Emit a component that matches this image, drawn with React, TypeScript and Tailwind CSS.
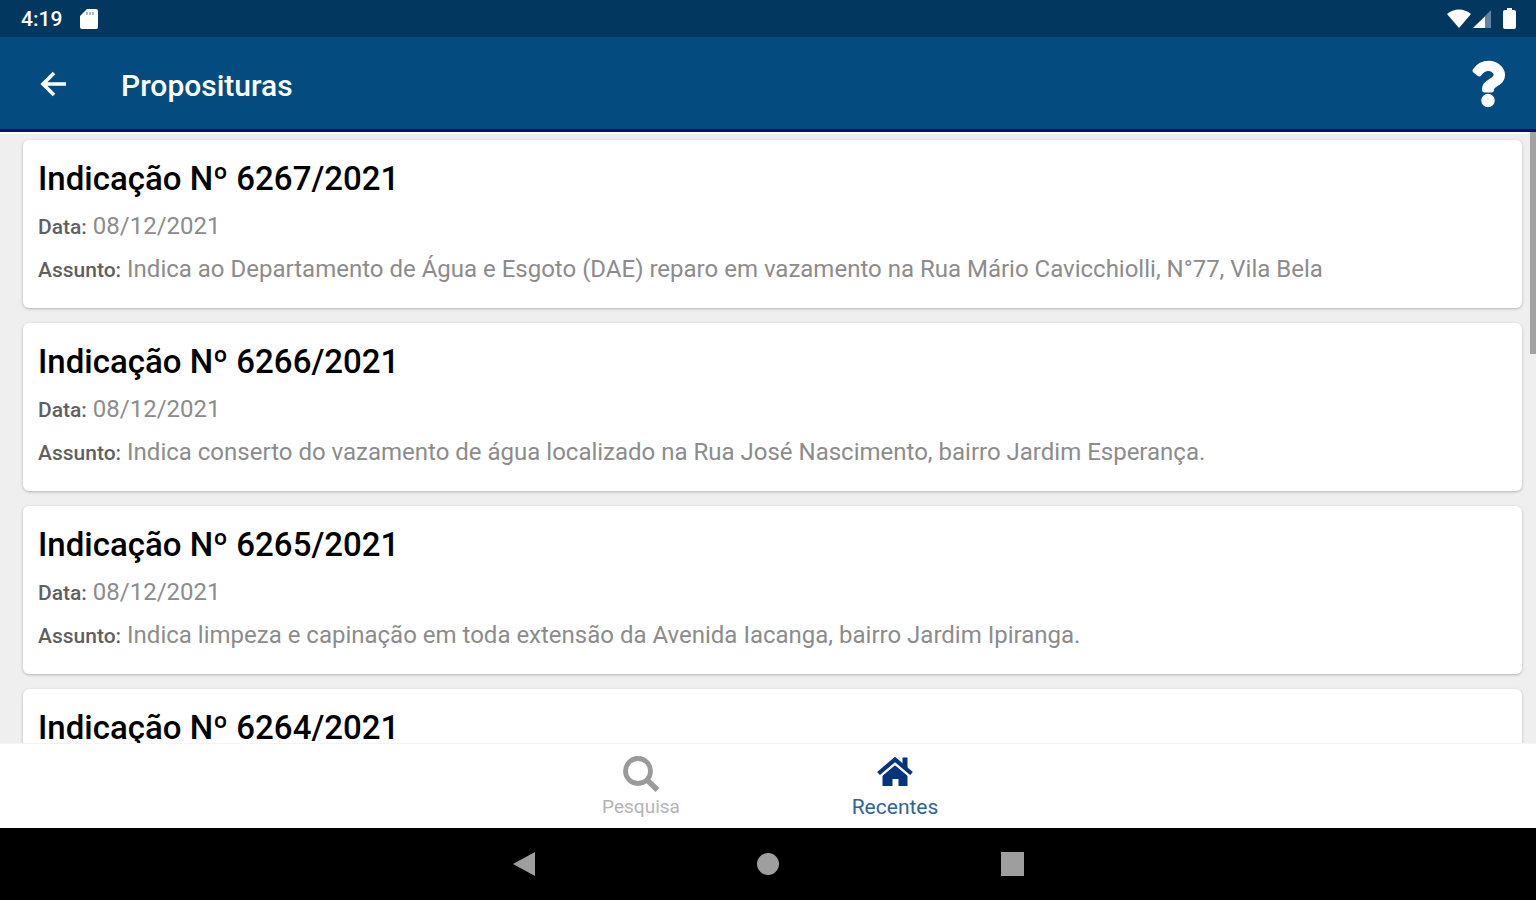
import React from "react";
import { FaQuestion } from "react-icons/fa";

type Proposal = { number: string; date: string; subject: string };

const proposals: Proposal[] = [
  {
    number: "6267/2021",
    date: "08/12/2021",
    subject:
      "Indica ao Departamento de Água e Esgoto (DAE) reparo em vazamento na Rua Mário Cavicchiolli, N°77, Vila Bela",
  },
  {
    number: "6266/2021",
    date: "08/12/2021",
    subject:
      "Indica conserto do vazamento de água localizado na Rua José Nascimento, bairro Jardim Esperança.",
  },
  {
    number: "6265/2021",
    date: "08/12/2021",
    subject:
      "Indica limpeza e capinação em toda extensão da Avenida Iacanga, bairro Jardim Ipiranga.",
  },
  { number: "6264/2021", date: "", subject: "" },
];

function StatusBar() {
  return (
    <div className="flex h-[37px] shrink-0 items-center justify-between bg-[#023860] pr-5 pl-[21px] text-white">
      <div className="flex items-center gap-[18px]">
        <span className="text-[21px] leading-6 font-medium">4:19</span>
        <svg className="h-5 w-[18px]" viewBox="0 0 18 20" aria-hidden="true">
          <path d="M7 0h9a2 2 0 0 1 2 2v16a2 2 0 0 1-2 2H2a2 2 0 0 1-2-2V7z" fill="#fff" />
          <path d="M7 3v3M10 3v3M13 3v3" stroke="#8fa9bd" strokeWidth="1.5" />
        </svg>
      </div>
      <div className="flex items-center">
        <svg className="h-5 w-6" viewBox="0 0 24 20" aria-hidden="true">
          <path d="M0 5C7-1 17-1 24 5L12 19z" fill="#fff" />
        </svg>
        <svg className="ml-[2px] h-5 w-[18px]" viewBox="0 0 18 20" aria-hidden="true">
          <path d="M18 1v18H0z" fill="#5f83a0" />
          <path d="M12 7.500v11.500H0z" fill="#fff" />
        </svg>
        <svg className="ml-3 h-[22px] w-[13px]" viewBox="0 0 13 22" aria-hidden="true">
          <path d="M4 0h5v2h2a2 2 0 0 1 2 2v15a2 2 0 0 1-2 2H2a2 2 0 0 1-2-2V4a2 2 0 0 1 2-2h2z" fill="#fff" />
        </svg>
      </div>
    </div>
  );
}

function AppHeader() {
  return (
    <header className="flex h-[95px] shrink-0 items-center justify-between border-b-3 border-[#00116b] bg-[#044b7f] pt-[2px] pr-[31px] pl-10 text-white">
      <div className="flex items-center gap-[54px]">
        <button type="button" aria-label="Voltar" className="block">
          <svg className="h-[26px] w-[27px]" viewBox="0 0 27 26" fill="none" stroke="#fff" strokeWidth="3.6" aria-hidden="true">
            <path d="M14 2 3 13l11 11M3 13h23" />
          </svg>
        </button>
        <h1 className="pt-1 text-[30px] leading-8 font-medium">Proposituras</h1>
      </div>
      <button type="button" aria-label="Ajuda" className="block">
        <FaQuestion className="h-[46px] w-[34px] overflow-visible stroke-current stroke-[14px]" />
      </button>
    </header>
  );
}

function ProposalCard({ proposal }: { proposal: Proposal }) {
  return (
    <li className="h-[168px] shrink-0 rounded-md bg-white px-[15px] pt-5 shadow-[0_1px_3px_rgba(0,0,0,0.25)]">
      <h2 className="text-[33px] leading-[38px] font-medium text-black">Indicação Nº {proposal.number}</h2>
      {proposal.date && (
        <>
          <p className="mt-3 text-2xl leading-8 text-[#8c8c8c]">
            <span className="text-[21px] font-medium text-[#5f5f5f]">Data:</span> {proposal.date}
          </p>
          <p className="mt-[10px] text-2xl leading-8 text-[#8c8c8c]">
            <span className="text-[21px] font-medium text-[#5f5f5f]">Assunto:</span> {proposal.subject}
          </p>
        </>
      )}
    </li>
  );
}

function TabBar() {
  return (
    <nav className="flex h-[85px] shrink-0 justify-center border-t border-[#f4f4f4] bg-white">
      <a href="#pesquisa" className="flex w-[254px] flex-col items-center pt-[11px] text-[#9a9a9a]">
        <svg className="h-[38px] w-[38px]" viewBox="0 0 38 38" fill="none" stroke="currentColor" aria-hidden="true">
          <circle cx="16" cy="16" r="12.5" strokeWidth="4.8" />
          <path d="m25 25 10.500 10" strokeWidth="5.6" />
        </svg>
        <span className="mt-[2px] text-[19px] leading-6 text-[#b4b4b4]">Pesquisa</span>
      </a>
      <a href="#recentes" className="flex w-[254px] flex-col items-center pt-[11px] text-[#04357c]">
        <svg className="h-[38px] w-[38px]" viewBox="0 0 38 38" aria-hidden="true">
          <path d="M6.500 20.500 19 10l12.500 10.500V31h-9v-7h-6v7h-10z" fill="currentColor" />
          <path d="M2.500 18.500 19 4.500l16.500 14" fill="none" stroke="currentColor" strokeWidth="4.2" />
          <path d="M4.500 21.500 19 9.200l14.500 12.300" fill="none" stroke="#fff" strokeWidth="1.500" />
          <path d="M26.500 2.500h5V13l-5-4z" fill="currentColor" />
        </svg>
        <span className="mt-[2px] text-[21px] leading-6 text-[#2e6594]">Recentes</span>
      </a>
    </nav>
  );
}

function SystemNav() {
  return (
    <div className="flex h-[72px] shrink-0 items-center justify-center bg-black">
      <button type="button" aria-label="Voltar" className="flex w-[244px] justify-center">
        <svg className="h-6 w-[22px]" viewBox="0 0 22 24" aria-hidden="true">
          <path d="M22 0v24L0 12z" fill="#9e9e9e" />
        </svg>
      </button>
      <button type="button" aria-label="Início" className="flex w-[244px] justify-center">
        <span className="size-[22px] rounded-full bg-[#9e9e9e]" />
      </button>
      <button type="button" aria-label="Aplicativos recentes" className="flex w-[244px] justify-center">
        <span className="h-6 w-[23px] bg-[#9e9e9e]" />
      </button>
    </div>
  );
}

export default function App() {
  return (
    <div className="flex h-screen flex-col overflow-hidden bg-[#efefef] font-[Roboto,sans-serif]">
      <StatusBar />
      <AppHeader />
      <main className="relative min-h-0 flex-1 overflow-hidden">
        <div className="h-[2px] bg-white" />
        <ul className="flex flex-col gap-[15px] pt-[6px] pr-[14px] pl-[23px]">
          {proposals.map((p) => (
            <ProposalCard key={p.number} proposal={p} />
          ))}
        </ul>
        <div className="absolute top-0 right-0 h-[222px] w-[6px] bg-[#a3a3a3]" />
      </main>
      <TabBar />
      <SystemNav />
    </div>
  );
}
